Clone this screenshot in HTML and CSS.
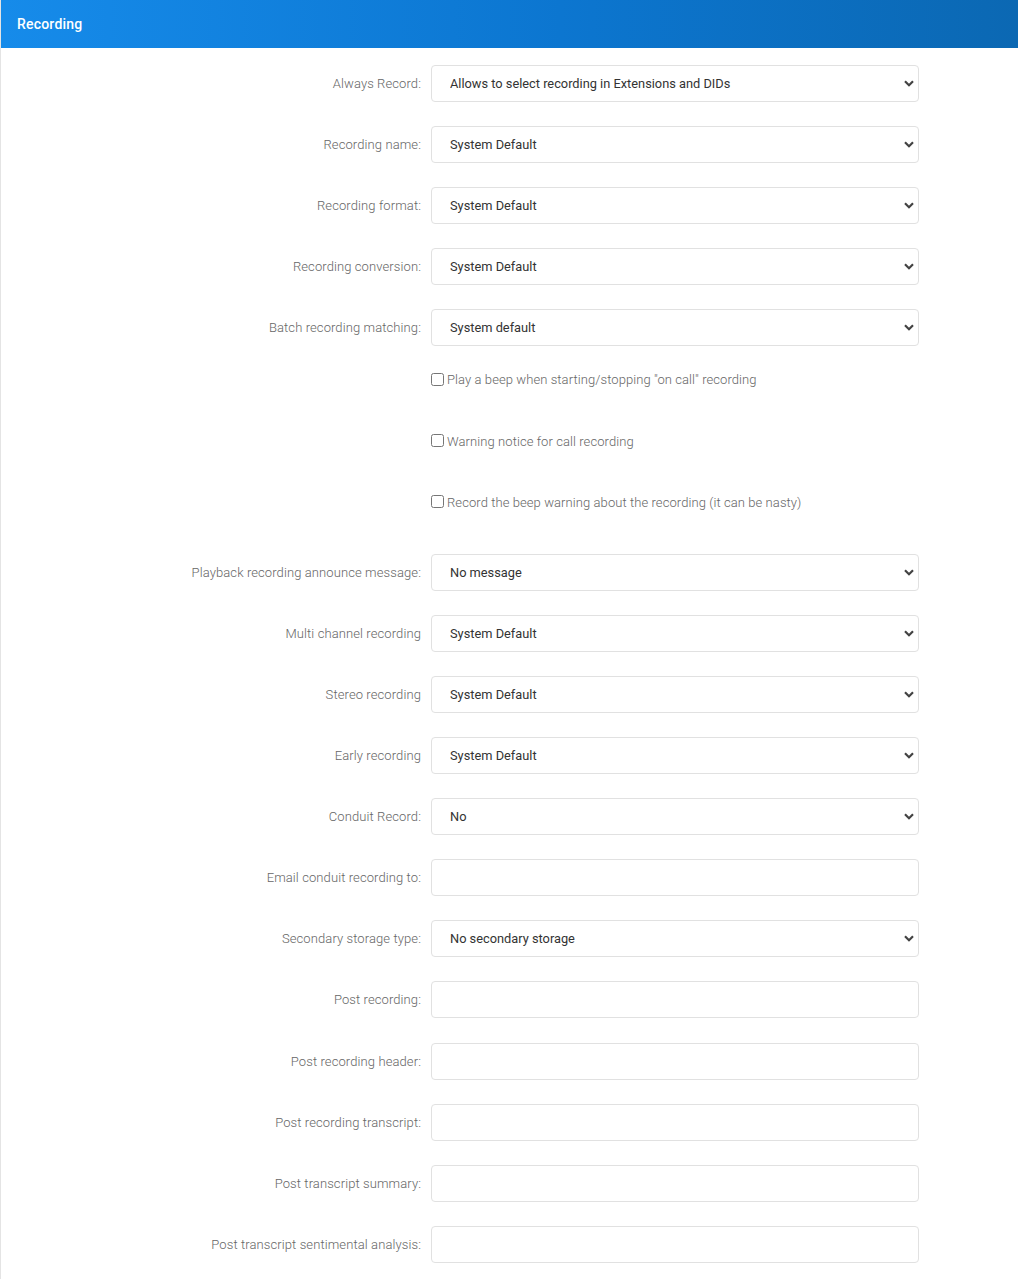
FILE: index.html
```html
<!DOCTYPE html>
<html>
<head>
<meta charset="utf-8">
<title>Recording</title>
<link rel="stylesheet" href="styles.css">
</head>
<body>

<div class="panel">
  <!-- panel title bar -->
  <div class="panel-head">Recording</div>

  <form class="panel-body" name="recForm">

    <div class="row">
      <label class="lbl">Always Record:</label>
      <select class="ctl"><option>Allows to select recording in Extensions and DIDs</option></select>
    </div>

    <div class="row">
      <label class="lbl">Recording name:</label>
      <select class="ctl"><option>System Default</option></select>
    </div>

    <div class="row">
      <label class="lbl">Recording format:</label>
      <select class="ctl"><option>System Default</option></select>
    </div>

    <div class="row">
      <label class="lbl">Recording conversion:</label>
      <select class="ctl"><option>System Default</option></select>
    </div>

    <div class="row">
      <label class="lbl">Batch recording matching:</label>
      <select class="ctl"><option>System default</option></select>
    </div>

    <!-- checkbox options -->
    <div class="row chk-row">
      <span></span>
      <label class="chk"><input type="checkbox">Play a beep when starting/stopping "on call" recording</label>
    </div>

    <div class="row chk-row">
      <span></span>
      <label class="chk"><input type="checkbox">Warning notice for call recording</label>
    </div>

    <div class="row chk-row">
      <span></span>
      <label class="chk"><input type="checkbox">Record the beep warning about the recording (it can be nasty)</label>
    </div>

    <div class="row">
      <label class="lbl">Playback recording announce message:</label>
      <select class="ctl"><option>No message</option></select>
    </div>

    <div class="row">
      <label class="lbl">Multi channel recording</label>
      <select class="ctl"><option>System Default</option></select>
    </div>

    <div class="row">
      <label class="lbl">Stereo recording</label>
      <select class="ctl"><option>System Default</option></select>
    </div>

    <div class="row">
      <label class="lbl">Early recording</label>
      <select class="ctl"><option>System Default</option></select>
    </div>

    <div class="row">
      <label class="lbl">Conduit Record:</label>
      <select class="ctl"><option>No</option></select>
    </div>

    <div class="row">
      <label class="lbl">Email conduit recording to:</label>
      <input type="text" class="ctl">
    </div>

    <div class="row">
      <label class="lbl">Secondary storage type:</label>
      <select class="ctl"><option>No secondary storage</option></select>
    </div>

    <div class="row">
      <label class="lbl">Post recording:</label>
      <input type="text" class="ctl">
    </div>

    <div class="row">
      <label class="lbl">Post recording header:</label>
      <input type="text" class="ctl">
    </div>

    <div class="row">
      <label class="lbl">Post recording transcript:</label>
      <input type="text" class="ctl">
    </div>

    <div class="row">
      <label class="lbl">Post transcript summary:</label>
      <input type="text" class="ctl">
    </div>

    <div class="row">
      <label class="lbl">Post transcript sentimental analysis:</label>
      <input type="text" class="ctl">
    </div>

  </form>
</div>

</body>
</html>
```

FILE: styles.css
```css
body {
  margin: 0;
  font-family: Roboto, "Liberation Sans", Arial, sans-serif;
  font-size: 13px;
  background: #fff;
}

.panel {
  border-left: 1px solid #e4e4e4;
  min-height: 1279px;
}

/* Blue title bar */
.panel-head {
  height: 48px;
  line-height: 48px;
  padding-left: 16px;
  color: #fff;
  font-size: 14px;
  font-weight: 500;
  letter-spacing: 0.2px;
  background: linear-gradient(90deg, #168bea 0%, #0c76d0 55%, #0b68b3 100%);
}

.panel-body {
  padding-top: 17px;
}

/* label column + control column */
.row {
  display: grid;
  grid-template-columns: 420px 488px;
  column-gap: 10px;
  align-items: center;
  margin-bottom: 24.1px;
}

.lbl {
  text-align: right;
  color: #666;
  font-weight: 300;
  letter-spacing: 0.1px;
}

.ctl {
  box-sizing: border-box;
  width: 488px;
  height: 37px;
  margin: 0;
  padding: 0 30px 0 18px;
  border: 1px solid #e1e1e1;
  border-radius: 4px;
  background-color: #fff;
  font-family: inherit;
  font-size: 12.8px;
  color: #333;
  outline: none;
}

select.ctl {
  -webkit-appearance: none;
  appearance: none;
  /* chevron on the right */
  background-image: url("data:image/svg+xml,%3Csvg xmlns='http://www.w3.org/2000/svg' width='10' height='7' viewBox='0 0 10 7'%3E%3Cpath d='M1 1.2 5 5.2 9 1.2' fill='none' stroke='%23444' stroke-width='2.2'/%3E%3C/svg%3E");
  background-repeat: no-repeat;
  background-position: right 4px center;
  background-size: 10px 7px;
}

/* checkbox rows */
.chk-row {
  height: 37px;
  align-items: start;
}

.chk {
  display: flex;
  align-items: center;
  line-height: 20px;
  color: #666;
  font-weight: 300;
  letter-spacing: 0.08px;
}

.chk input {
  width: 13px;
  height: 13px;
  margin: 0 3px 2px 0;
}
```
